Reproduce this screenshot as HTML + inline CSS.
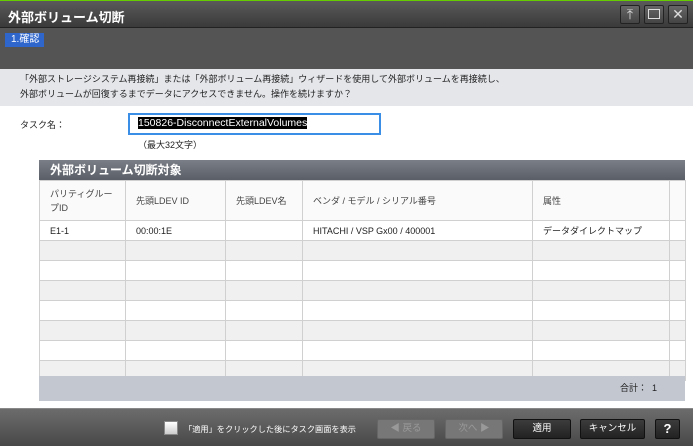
<!DOCTYPE html>
<html><head><meta charset="utf-8"><style>
*{margin:0;padding:0;box-sizing:border-box}
body{width:693px;height:446px;overflow:hidden;background:#fff;font-family:"Liberation Sans","Noto Sans CJK JP",sans-serif;font-size:10px;color:#222;position:relative}
.a{position:absolute}
.title{left:0;top:0;width:693px;height:28px;background:linear-gradient(#5a5a5a,#3a3a3a);border-top:1px solid #6c0;border-bottom:1px solid #222}
.title span{position:absolute;left:8px;top:6px;color:#fff;font-weight:bold;font-size:13px}
.wb{top:5px;width:20px;height:19px;border:1px solid #222;border-radius:2px;background:linear-gradient(#666,#444);color:#ddd;text-align:center;font-size:14px;line-height:17px}
.band{left:0;top:28px;width:693px;height:41px;background:#545454}
.step{left:5px;top:33px;width:39px;height:14px;background:#2f66cc;color:#fff;font-size:10px;line-height:14px;padding-left:6px}
.msg{left:0;top:69px;width:693px;height:37px;background:#e4e6ea;padding:3px 0 0 20px;line-height:15px;font-size:9px}
.tbl{left:39px;top:160px;width:646px}
.th{height:20px;background:linear-gradient(#7a7e86,#5a5e66);color:#fff;font-weight:bold;font-size:12px;line-height:20px;padding-left:11px}
table{border-collapse:collapse;width:646px;table-layout:fixed}
td{border:1px solid #d0d0d0;height:20px;font-size:9px;padding-left:10px;white-space:nowrap;overflow:hidden}
tr.h td{height:40px;background:#fafafa;color:#444;line-height:14px}
tr.g td{background:#f0f0f0}
.foot{left:39px;top:376px;width:646px;height:25px;background:#c3c7d0;text-align:right;padding-right:28px;line-height:24px;font-size:9px}
.bot{left:0;top:408px;width:693px;height:38px;background:linear-gradient(#6c6c6c,#484848);border-top:1px solid #888}
.btn{top:419px;height:20px;border:1px solid #111;border-radius:2px;background:linear-gradient(#3c3c3c,#222);color:#fff;text-align:center;line-height:18px;font-size:9.5px}
.dis{border-color:#666;background:#777;color:#999}
</style></head><body>
<div class="a title"><span>外部ボリューム切断</span></div>
<div class="a wb" style="left:620px">⤒</div>
<div class="a wb" style="left:644px"><div style="width:12px;height:10px;border:1px solid #ddd;margin:3px auto"></div></div>
<div class="a wb" style="left:668px">✕</div>
<div class="a band"></div>
<div class="a step">1.確認</div>
<div class="a msg">「外部ストレージシステム再接続」または「外部ボリューム再接続」ウィザードを使用して外部ボリュームを再接続し、<br>外部ボリュームが回復するまでデータにアクセスできません。操作を続けますか？</div>
<div class="a" style="left:20px;top:118px;font-size:9px">タスク名：</div>
<div class="a" style="left:128px;top:113px;width:253px;height:22px;border:2px solid #3a8ee6;background:#fff;padding:2px 0 0 8px"><span style="background:#000;color:#fff;font-size:10.5px">150826-DisconnectExternalVolumes</span></div>
<div class="a" style="left:138px;top:138px;font-size:9px">（最大32文字）</div>
<div class="a tbl"><div class="th">外部ボリューム切断対象</div>
<table><colgroup><col style="width:86px"><col style="width:100px"><col style="width:77px"><col style="width:230px"><col style="width:137px"><col style="width:16px"></colgroup>
<tr class="h"><td>パリティグルー<br>プID</td><td>先頭LDEV ID</td><td>先頭LDEV名</td><td>ベンダ / モデル / シリアル番号</td><td>属性</td><td></td></tr>
<tr><td>E1-1</td><td>00:00:1E</td><td></td><td>HITACHI / VSP Gx00 / 400001</td><td>データダイレクトマップ</td><td></td></tr>
<tr class="g"><td></td><td></td><td></td><td></td><td></td><td></td></tr>
<tr><td></td><td></td><td></td><td></td><td></td><td></td></tr>
<tr class="g"><td></td><td></td><td></td><td></td><td></td><td></td></tr>
<tr><td></td><td></td><td></td><td></td><td></td><td></td></tr>
<tr class="g"><td></td><td></td><td></td><td></td><td></td><td></td></tr>
<tr><td></td><td></td><td></td><td></td><td></td><td></td></tr>
<tr class="g"><td style="height:16px"></td><td></td><td></td><td></td><td></td><td></td></tr>
</table></div>
<div class="a foot">合計：&nbsp; 1</div>
<div class="a bot"></div>
<div class="a" style="left:164px;top:421px;width:14px;height:14px;border:1px solid #888;background:linear-gradient(#fff,#ccc)"></div>
<div class="a" style="left:184px;top:423px;color:#fff;font-size:8.2px;white-space:nowrap">「適用」をクリックした後にタスク画面を表示</div>
<div class="a btn dis" style="left:377px;width:58px">◀ 戻る</div>
<div class="a btn dis" style="left:445px;width:58px">次へ ▶</div>
<div class="a btn" style="left:513px;width:58px">適用</div>
<div class="a btn" style="left:580px;width:65px">キャンセル</div>
<div class="a btn" style="left:655px;width:25px;font-weight:bold;font-size:13px">?</div>
</body></html>
